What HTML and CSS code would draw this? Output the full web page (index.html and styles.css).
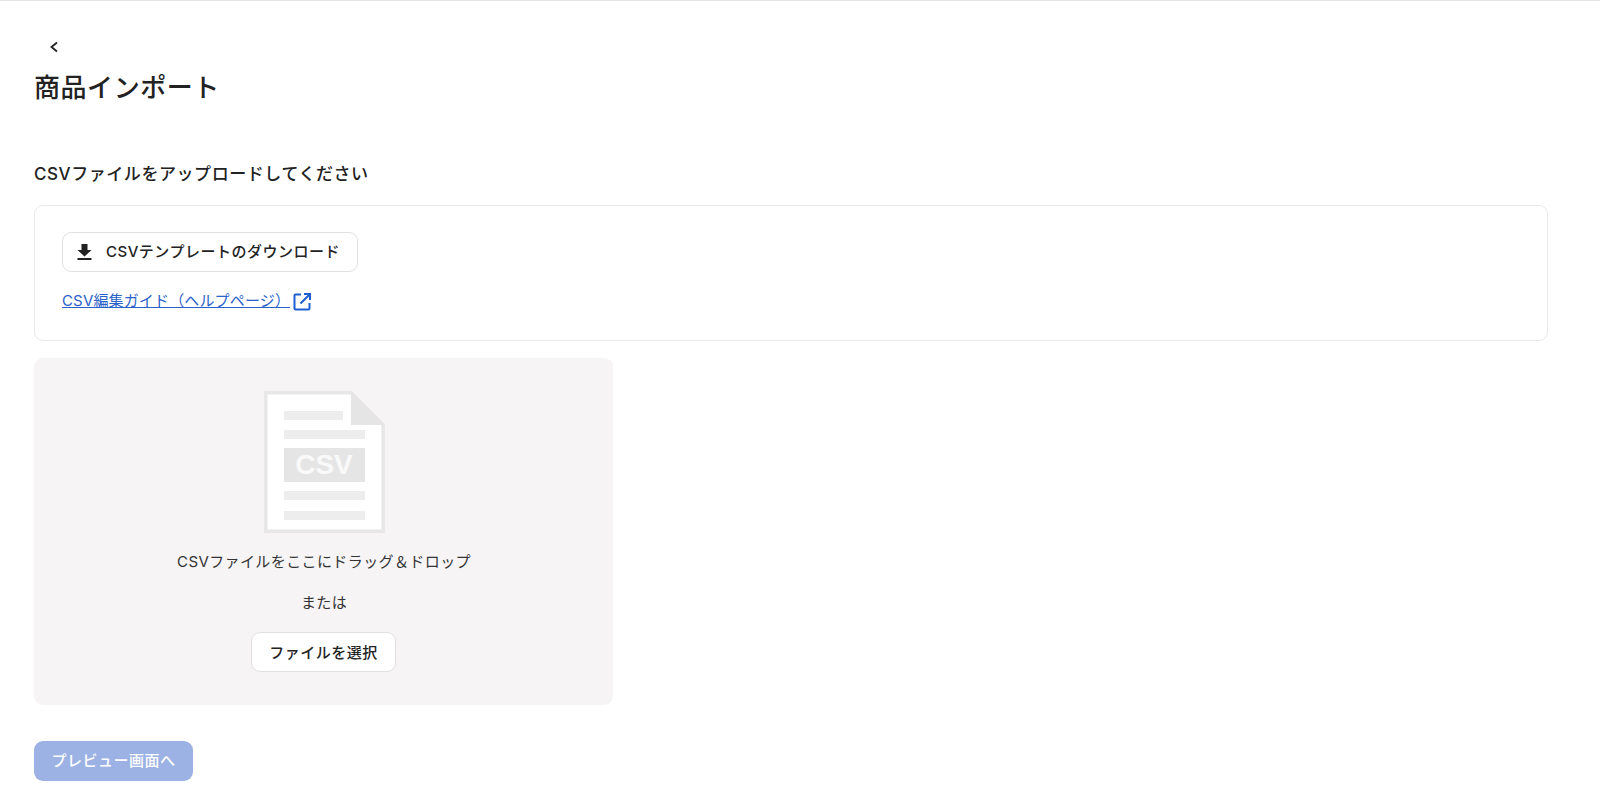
FILE: index.html
```html
<!DOCTYPE html>
<html lang="ja">
<head>
<meta charset="utf-8">
<title>商品インポート</title>
<link rel="stylesheet" href="styles.css">
</head>
<body>
<main class="page">
  <a class="back" href="#" aria-label="戻る">
    <svg width="12" height="12" viewBox="0 0 12 12"><path d="M9 1.500 3.500 6 9 10.500" fill="none" stroke="#222" stroke-width="1.800"/></svg>
  </a>
  <h1 class="title">商品インポート</h1>
  <h2 class="section-title">CSVファイルをアップロードしてください</h2>
  <section class="card">
    <button class="btn btn-template" type="button">
      <svg width="15" height="16" viewBox="0 0 15 16"><path d="M4.500 0h6v6h4L7.500 12.500 .5 6h4z M.5 14h14v2H.5z" fill="#222"/></svg>
      <span>CSVテンプレートのダウンロード</span>
    </button>
    <a class="guide" href="#"><span class="guide-text">CSV編集ガイド（ヘルプページ）</span>
      <svg width="18" height="18" viewBox="0 0 18 18"><path d="M8 1.500H2.500a1 1 0 0 0-1 1v13a1 1 0 0 0 1 1h13a1 1 0 0 0 1-1V10M11 1H17V7M16.800 1.200 7.500 10.500" fill="none" stroke="#1f5fd0" stroke-width="2"/></svg>
    </a>
  </section>
  <section class="drop">
    <svg class="doc" width="121" height="142" viewBox="0 0 121 142">
      <path d="M1.800 1.800H87L119.200 34V140.200H1.800z" fill="#fff" stroke="#e8e7e7" stroke-width="3.500"/>
      <path d="M87 1.800 119.200 34H87z" fill="#e6e5e5"/>
      <rect x="20" y="20" width="59" height="9" fill="#eeeded"/>
      <rect x="20" y="39" width="81" height="9" fill="#eeeded"/>
      <rect x="20" y="57" width="81" height="34" fill="#e6e5e5"/>
      <rect x="20" y="100" width="81" height="9" fill="#eeeded"/>
      <rect x="20" y="120" width="81" height="9" fill="#eeeded"/>
      <text x="60" y="83" class="doc-label" text-anchor="middle">CSV</text>
    </svg>
    <p class="drop-text">CSVファイルをここにドラッグ＆ドロップ</p>
    <p class="drop-or">または</p>
    <button class="btn btn-select" type="button">ファイルを選択</button>
  </section>
  <button class="btn-primary" type="button" disabled>プレビュー画面へ</button>
</main>
</body>
</html>
```
FILE: styles.css
```css
* { box-sizing: border-box; }
html, body { margin: 0; height: 100%; }
body {
  background: #fff;
  color: #222;
  font-family: Inter, "Noto Sans CJK JP", sans-serif;
  border-top: 1px solid #e4e4e4;
}
.page { padding: 36px 52px 0 34px; }
.back {
  display: flex;
  width: 12px;
  height: 18px;
  margin-top: 1px;
  margin-left: 14px;
  align-items: center;
}
.title {
  margin: 12px 0 0;
  font-size: 26px;
  font-weight: 500;
  line-height: 40px;
  letter-spacing: .55px;
}
.section-title {
  margin: 53px 0 0;
  font-size: 17px;
  font-weight: 500;
  line-height: 26px;
  letter-spacing: .56px;
}
.card {
  margin-top: 18px;
  height: 136px;
  padding: 26px 27px;
  border: 1px solid #e9e9e9;
  border-radius: 9px;
}
.btn {
  font-family: inherit;
  font-size: 15px;
  font-weight: 500;
  letter-spacing: .5px;
  color: #222;
  background: #fff;
  border: 1px solid #e0e0e0;
  border-radius: 9px;
  height: 40px;
  padding: 0 0 2px;
  display: flex;
  align-items: center;
  justify-content: center;
}
.btn-template { width: 296px; gap: 14px; padding: 0 0 3px 14px; justify-content: flex-start; }
.btn-template svg { margin-top: 2px; }
.guide {
  display: flex;
  align-items: center;
  width: max-content;
  margin-top: 19px;
  gap: 3px;
  color: #2a62c9;
  font-size: 15px;
  letter-spacing: .15px;
  line-height: 20px;
  text-decoration: none;
}
.guide-text { text-decoration: underline; padding-bottom: 2px; }
.drop {
  margin-top: 17px;
  width: 579px;
  height: 347px;
  padding-top: 33px;
  border-radius: 9px;
  background: #f6f4f5;
  display: flex;
  flex-direction: column;
  align-items: center;
}
.doc { display: block; margin-left: 2px; }
.doc-label {
  font-family: "Liberation Sans", sans-serif;
  font-size: 28px;
  font-weight: 700;
  fill: #f9f9f9;
}
.drop-text, .drop-or {
  margin: 0 0 0 1px;
  font-size: 15px;
  letter-spacing: .4px;
  line-height: 20px;
  color: #333;
}
.drop-text { margin-top: 19px; }
.drop-or { margin-top: 21px; }
.btn-select { width: 145px; margin-top: 19px; }
.btn-primary {
  display: block;
  margin-top: 36px;
  width: 159px;
  height: 40px;
  padding: 0 0 3px;
  border: 0;
  border-radius: 9px;
  background: #9db2e4;
  color: #fff;
  font-family: inherit;
  font-size: 15px;
  font-weight: 500;
  letter-spacing: .5px;
}
```
